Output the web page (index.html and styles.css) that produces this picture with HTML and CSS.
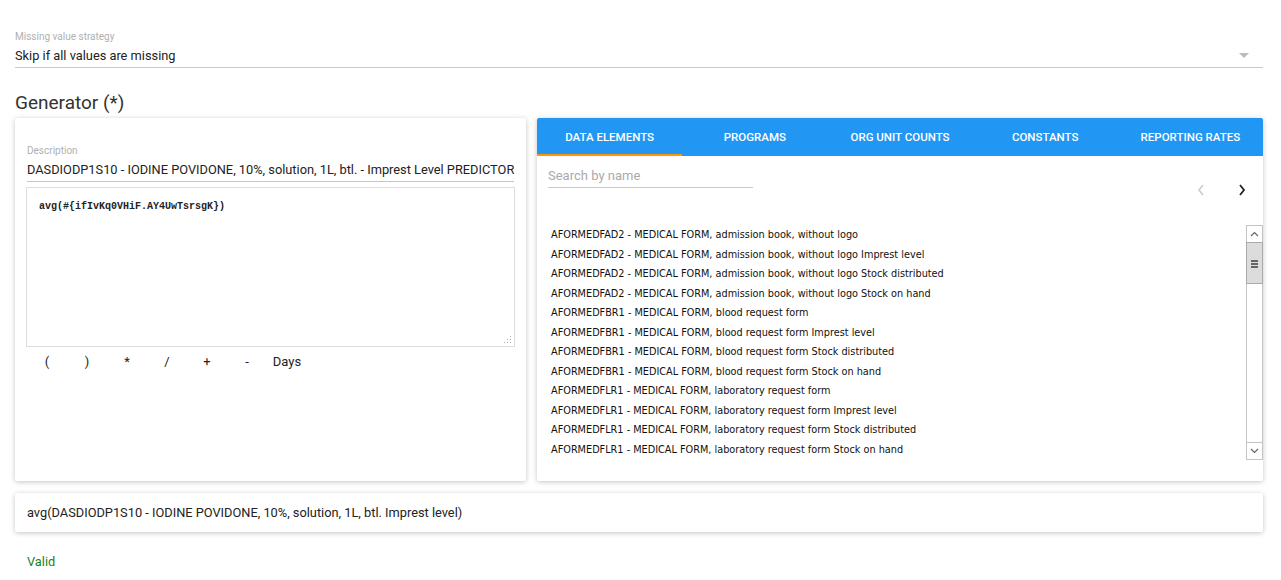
FILE: index.html
```html
<!DOCTYPE html>
<html>
<head>
<meta charset="utf-8">
<link rel="stylesheet" href="styles.css">
</head>
<body>
<div class="page">
  <div class="select-field">
    <div class="field-label">Missing value strategy</div>
    <div class="select-row">
      <span class="select-value">Skip if all values are missing</span>
      <span class="caret"></span>
    </div>
  </div>

  <h2 class="section-title">Generator (*)</h2>

  <div class="editor-row">
    <div class="card left-card">
      <div class="desc-field">
        <div class="field-label">Description</div>
        <div class="desc-value">DASDIODP1S10 - IODINE POVIDONE, 10%, solution, 1L, btl. - Imprest Level PREDICTOR</div>
      </div>
      <div class="code-box">
        <div class="code">avg(#{ifIvKq0VHiF.AY4UwTsrsgK})</div>
        <svg class="grip" width="8" height="8" viewBox="0 0 8 8"><g fill="#aaa"><rect x="6" y="0" width="1" height="1"/><rect x="3" y="3" width="1" height="1"/><rect x="6" y="3" width="1" height="1"/><rect x="0" y="6" width="1" height="1"/><rect x="3" y="6" width="1" height="1"/><rect x="6" y="6" width="1" height="1"/></g></svg>
      </div>
      <div class="ops">
        <span class="op">(</span>
        <span class="op">)</span>
        <span class="op">*</span>
        <span class="op">/</span>
        <span class="op">+</span>
        <span class="op">-</span>
        <span class="op">Days</span>
      </div>
    </div>

    <div class="card right-card">
      <div class="tabs">
        <div class="tab active">DATA ELEMENTS</div>
        <div class="tab">PROGRAMS</div>
        <div class="tab">ORG UNIT COUNTS</div>
        <div class="tab">CONSTANTS</div>
        <div class="tab">REPORTING RATES</div>
      </div>
      <div class="tab-body">
        <div class="list-header">
          <div class="search">Search by name</div>
          <div class="pager">
            <svg class="pg prev" width="10" height="14" viewBox="0 0 10 14"><path d="M7 2 L3 7 L7 12" fill="none" stroke="#ccc" stroke-width="1.6"/></svg>
            <svg class="pg next" width="10" height="14" viewBox="0 0 10 14"><path d="M3 2 L7 7 L3 12" fill="none" stroke="#222" stroke-width="1.8"/></svg>
          </div>
        </div>
        <div class="list-box">
          <ul class="list">
            <li>AFORMEDFAD2 - MEDICAL FORM, admission book, without logo</li>
            <li>AFORMEDFAD2 - MEDICAL FORM, admission book, without logo Imprest level</li>
            <li>AFORMEDFAD2 - MEDICAL FORM, admission book, without logo Stock distributed</li>
            <li>AFORMEDFAD2 - MEDICAL FORM, admission book, without logo Stock on hand</li>
            <li>AFORMEDFBR1 - MEDICAL FORM, blood request form</li>
            <li>AFORMEDFBR1 - MEDICAL FORM, blood request form Imprest level</li>
            <li>AFORMEDFBR1 - MEDICAL FORM, blood request form Stock distributed</li>
            <li>AFORMEDFBR1 - MEDICAL FORM, blood request form Stock on hand</li>
            <li>AFORMEDFLR1 - MEDICAL FORM, laboratory request form</li>
            <li>AFORMEDFLR1 - MEDICAL FORM, laboratory request form Imprest level</li>
            <li>AFORMEDFLR1 - MEDICAL FORM, laboratory request form Stock distributed</li>
            <li>AFORMEDFLR1 - MEDICAL FORM, laboratory request form Stock on hand</li>
          </ul>
          <div class="scrollbar">
            <div class="sb-btn"><svg width="9" height="6" viewBox="0 0 9 6"><path d="M1 5 L4.5 1.5 L8 5" fill="none" stroke="#666" stroke-width="1.2"/></svg></div>
            <div class="sb-thumb"><span></span><span></span><span></span></div>
            <div class="sb-track"></div>
            <div class="sb-btn"><svg width="9" height="6" viewBox="0 0 9 6"><path d="M1 1 L4.5 4.5 L8 1" fill="none" stroke="#666" stroke-width="1.2"/></svg></div>
          </div>
        </div>
      </div>
    </div>
  </div>

  <div class="card result-card">avg(DASDIODP1S10 - IODINE POVIDONE, 10%, solution, 1L, btl. Imprest level)</div>

  <div class="valid">Valid</div>
</div>
</body>
</html>
```

FILE: styles.css
```css
* { box-sizing: border-box; }
html, body { margin: 0; padding: 0; background: #fff; }
body { font-family: Roboto, "Liberation Sans", sans-serif; color: #222; }

.page {
  padding: 31px 18px 0 15px;
}

.field-label {
  font-size: 10px;
  color: #b0b0b0;
  line-height: 12px;
}

.select-field {
  border-bottom: 1px solid #c8c8c8;
  height: 37px;
}
.select-row {
  display: flex;
  align-items: center;
  justify-content: space-between;
  height: 24px;
}
.select-value { font-size: 12.8px; color: #222; }
.caret {
  width: 0; height: 0;
  border-left: 5px solid transparent;
  border-right: 5px solid transparent;
  border-top: 5px solid #bbb;
  margin-right: 14px;
}

.section-title {
  margin: 22px 0 0 0;
  font-size: 19px;
  font-weight: 400;
  color: #333;
  line-height: 26px;
}

.editor-row {
  display: flex;
  gap: 11px;
  margin-top: 2px;
}

.card {
  background: #fff;
  box-shadow: 0 1px 6px rgba(0,0,0,0.12), 0 1px 4px rgba(0,0,0,0.12);
  border-radius: 2px;
}

.left-card {
  width: 511px;
  height: 363px;
  padding: 27px 11px 0 11px;
}
.desc-field {
  border-bottom: 1px solid #c8c8c8;
  margin: 0 1px 5px 1px;
  padding-bottom: 2px;
}
.desc-value {
  font-size: 12.8px;
  color: #222;
  margin-top: 4px;
  white-space: nowrap;
  line-height: 18px;
}
.code-box {
  position: relative;
  height: 160px;
  border: 1px solid #ddd;
  padding: 13px 12px;
}
.code {
  font-family: "Liberation Mono", "Courier New", monospace;
  font-size: 10px;
  color: #222;
  font-weight: 700;
}
.grip {
  position: absolute;
  right: 2px;
  bottom: 2px;
}
.ops {
  display: flex;
  padding-left: 1px;
  margin-top: 7px;
}
.op {
  width: 40px;
  text-align: center;
  font-size: 13px;
  color: #222;
  line-height: 16px;
}

.right-card {
  flex: 1;
  height: 363px;
  overflow: hidden;
}
.tabs {
  display: flex;
  background: #2196f3;
  height: 38px;
}
.tab {
  flex: 1;
  display: flex;
  align-items: center;
  justify-content: center;
  color: #fff;
  font-size: 11.5px;
  font-weight: 500;
  border-bottom: 2px solid transparent;
  padding-top: 2px;
}
.tab.active { border-bottom-color: #ff9800; }

.tab-body {
  padding: 11px 0 0 11px;
}
.list-header {
  display: flex;
  justify-content: space-between;
  align-items: flex-start;
  height: 58px;
}
.search {
  width: 205px;
  border-bottom: 1px solid #c8c8c8;
  font-size: 13px;
  color: #aaa;
  padding-bottom: 3px;
  line-height: 17px;
}
.pager {
  display: flex;
  gap: 31px;
  padding-right: 16px;
  margin-top: 16px;
  align-items: center;
}

.list-box {
  display: flex;
  height: 235px;
}
.list {
  flex: 1;
  list-style: none;
  margin: 0;
  padding: 0 0 0 3px;
  font-family: "DejaVu Sans Condensed", "DejaVu Sans", sans-serif;
  font-size: 10.8px;
  color: #111;
}
.list li {
  height: 19.55px;
  line-height: 19.55px;
  white-space: nowrap;
}
.scrollbar {
  width: 17px;
  display: flex;
  flex-direction: column;
  border: 1px solid #c4c4c4;
}
.sb-btn {
  height: 16px;
  display: flex;
  align-items: center;
  justify-content: center;
}
.sb-thumb {
  height: 42px;
  background: #dcdcdc;
  border: 1px solid #aaa;
  margin: 0 -1px;
  display: flex;
  flex-direction: column;
  align-items: center;
  justify-content: center;
  gap: 2px;
}
.sb-thumb span {
  width: 7px;
  height: 1px;
  background: #666;
  box-shadow: 0 1px 0 #666;
}
.sb-track {
  flex: 1;
  border-bottom: 1px solid #c4c4c4;
}

.result-card {
  margin-top: 12px;
  height: 39px;
  display: flex;
  align-items: center;
  padding-left: 12px;
  font-size: 12.8px;
  color: #222;
}

.valid {
  margin: 22px 0 0 12px;
  font-size: 12.8px;
  color: #1b7f1b;
}
```
